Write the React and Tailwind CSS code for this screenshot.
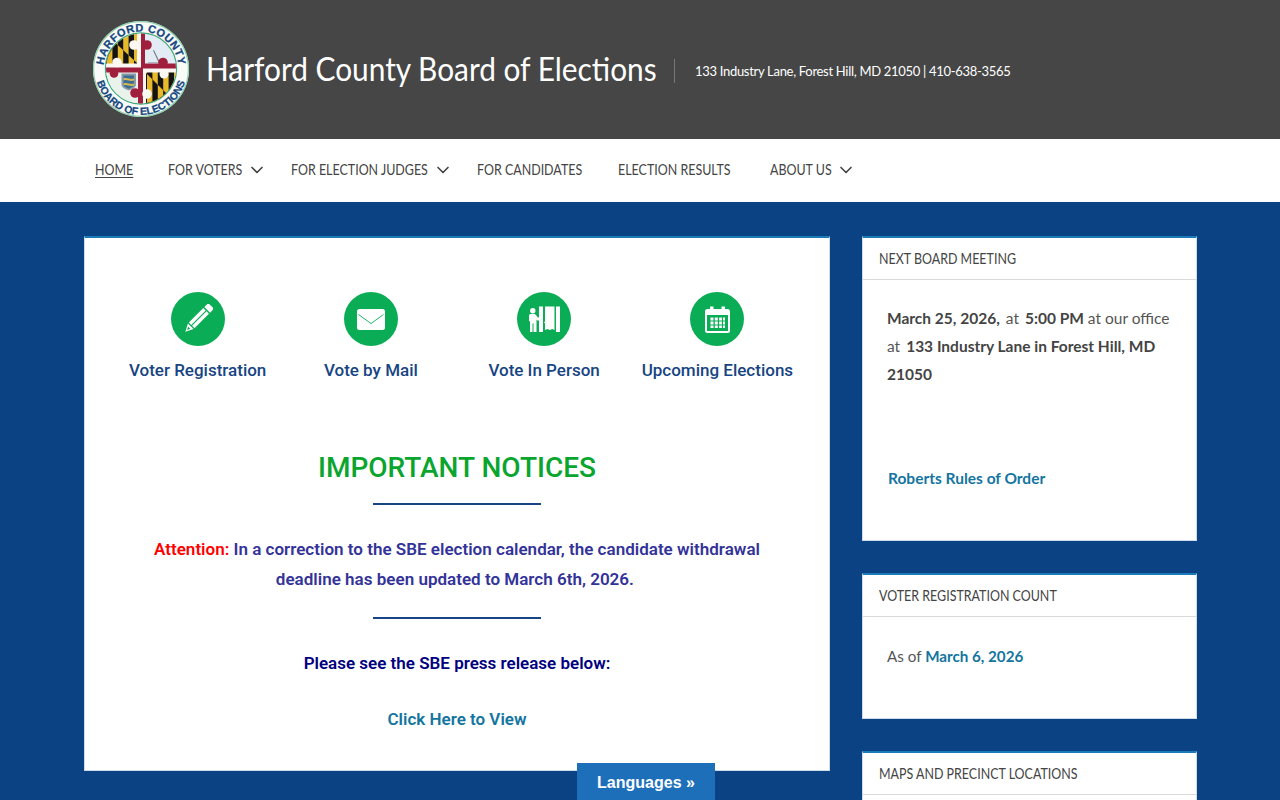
import React from 'react';
import { FiChevronDown } from 'react-icons/fi';

const NAV_ITEMS = [
  { label: 'HOME', width: 'w-[37px]', active: true },
  { label: 'FOR VOTERS', width: 'w-[75px]', menu: true },
  { label: 'FOR ELECTION JUDGES', width: 'w-[138px]', menu: true },
  { label: 'FOR CANDIDATES', width: 'w-[105px]' },
  { label: 'ELECTION RESULTS', width: 'w-[116px]' },
  { label: 'ABOUT US', width: 'w-[62px]', menu: true },
];

// Calvert quarter: gold and black pallets, counterchanged below the diagonal
const Calvert = ({ id, x, y, w, h }) => {
  const pallets = [0, 2, 4].map((i) => x + 2 + i * 5.4);
  return (
    <g>
      <defs>
        <clipPath id={id}><path d={`M${x} ${y}L${x + w} ${y + h}H${x}Z`} /></clipPath>
      </defs>
      <rect x={x} y={y} width={w} height={h} fill="#e9b92c" />
      {pallets.map((px) => <rect key={px} x={px} y={y} width="5.4" height={h} fill="#141414" />)}
      <g clipPath={`url(#${id})`}>
        <rect x={x} y={y} width={w} height={h} fill="#141414" />
        {pallets.map((px) => <rect key={px} x={px} y={y} width="5.4" height={h} fill="#e9b92c" />)}
      </g>
    </g>
  );
};

const Seal = () => (
  <svg viewBox="0 0 96 96" className="h-24 w-24 shrink-0">
    <defs>
      <clipPath id="seal-inner"><circle cx="48" cy="47.500" r="35" /></clipPath>
      <path id="seal-top" d="M 10.500 48 A 37.500 37.500 0 0 1 85.500 48" />
      <path id="seal-bottom" d="M 2 48 A 46 46 0 0 0 94 48" />
    </defs>
    <circle cx="48" cy="48" r="48" fill="#f8fbf8" />
    <circle cx="48" cy="48" r="47.400" fill="none" stroke="#8fd0ac" strokeWidth="1.200" />
    <circle cx="48" cy="47.500" r="35.600" fill="#e3ecf4" stroke="#3fa878" strokeWidth="1.200" />
    <text fontFamily="'Liberation Sans', sans-serif" fontSize="11" fontWeight="700" fill="#17477f" stroke="#17477f" strokeWidth="0.25" letterSpacing="0.4">
      <textPath href="#seal-top" startOffset="50%" textAnchor="middle">HARFORD COUNTY</textPath>
    </text>
    <text fontFamily="'Liberation Sans', sans-serif" fontSize="10.400" fontWeight="700" fill="#17477f" stroke="#17477f" strokeWidth="0.25">
      <textPath href="#seal-bottom" startOffset="50%" textAnchor="middle">BOARD OF ELECTIONS</textPath>
    </text>
    <g clipPath="url(#seal-inner)">
      <Calvert id="calvert-a" x={12} y={12} w={33} h={31} />
      <Calvert id="calvert-b" x={52} y={51} w={33} h={33} />
      <rect x="12" y="51" width="34" height="34" fill="#e9f3ec" />
      <path d="M28.500 52.500h14.500v11c0 3-4 5-7.200 6-3.300-1-7.300-3-7.300-6z" fill="#8a9aa6" />
      <path d="M30.500 54.500h10.500v9c0 2-3 3.500-5.200 4.300-2.300-.8-5.300-2.300-5.300-4.300z" fill="#3d6c94" />
      <path d="M30.500 57.500c3-1.500 7 1.500 10.500 0v2c-3.500 1.500-7.500-1.500-10.500 0zM30.500 62.500c3-1.500 7 1.500 10.500 0v2c-3.500 1.500-7.500-1.500-10.500 0z" fill="#d7bb52" />
      <path d="M61 29l5.500 11.500-1.200.6L60 29.500z" fill="#7b8086" />
      <path d="M55 41.500h18" stroke="#aab6c2" strokeWidth="1.200" />
      {/* counterchanged cross */}
      <path d="M44 12h4v35h-4zM12 42.500h33v4H12zM49.500 51h3.500v33h-3.500zM48 47.500h36v4H48z" fill="#fbf7f2" />
      <path d="M48 12h4v35h-4zM12 46.500h36v5H12zM45 47h5v37h-5zM48 42.500h36v5H48z" fill="#9f1f3c" />
      <circle cx="54" cy="24" r="4.800" fill="#9f1f3c" />
      <circle cx="70" cy="41.500" r="4.800" fill="#9f1f3c" />
      <circle cx="21" cy="52.500" r="4.300" fill="#9f1f3c" />
      <circle cx="42" cy="72" r="4.800" fill="#9f1f3c" />
      <circle cx="41" cy="24" r="4.800" fill="#fbf7f2" />
      <circle cx="24" cy="41.500" r="4.800" fill="#fbf7f2" />
      <circle cx="71" cy="53" r="4.500" fill="#fbf7f2" />
      <circle cx="54" cy="73" r="4.800" fill="#fbf7f2" />
    </g>
  </svg>
);

const PencilIcon = () => (
  <svg viewBox="0 0 30 30" className="h-[30px] w-[30px]" fill="#fff">
    <g transform="rotate(45 15 15)">
      <path d="M11 -1.500a2 2 0 0 1 2-2h4a2 2 0 0 1 2 2V2h-8z" />
      <path d="M11 3.500h3.400V24H11zM15.600 3.500H19V24h-3.400z" />
      <path d="M11 25.200h8L15 33zM13.600 27.500h2.800L15 30.500z" fillRule="evenodd" />
    </g>
  </svg>
);

const MailIcon = () => (
  <svg viewBox="0 0 28 21" className="h-[21px] w-[28px]">
    <rect width="28" height="21" rx="2.500" fill="#fff" />
    <path d="M1.500 5.500 14 14.500l12.500-9" fill="none" stroke="#0aad55" strokeWidth="0.900" />
  </svg>
);

const BoothIcon = () => (
  <svg viewBox="0 0 31 27" className="h-[27px] w-[31px]" fill="#fff">
    <circle cx="3.800" cy="4.700" r="2.700" />
    <path d="M0 9.500a1.500 1.500 0 0 1 1.500-1.500H6l3 3.500h1V.500h4V26h-4v-11.500H8.500L7.500 13.500V26H4.500v-8.500H3.500V26H1v-10.500L0 15z" />
    <path d="M16 .500h9.500V24l-2.200-1-2.400 1-2.500-1-2.400 1v-6.500l-1-1 1-1z" />
    <path d="M27 .500h4V26h-4z" />
  </svg>
);

const CalendarIcon = () => (
  <svg viewBox="0 0 25 27" className="h-[27px] w-[25px]">
    <path d="M2.500 3H5V.500h3.500V3h8V.500H20V3h2.500A2.500 2.500 0 0 1 25 5.500v19a2.500 2.500 0 0 1-2.500 2.500h-20A2.500 2.500 0 0 1 0 24.500v-19A2.500 2.500 0 0 1 2.500 3z" fill="#fff" />
    <rect x="2" y="9" width="21" height="16" fill="#0aad55" />
    <path d="M5.500 11.500h3v3h-3zM9.800 11.500h3v3h-3zM14.100 11.500h2.800v3h-2.800zM18 11.500h2v3h-2zM5.500 15.500h3v3h-3zM9.800 15.500h3v3h-3zM14.100 15.500h2.800v3h-2.800zM18 15.500h2v3h-2zM5.500 19.500h3v2.500h-3zM9.800 19.500h3v2.500h-3zM14.100 19.500h2.800v2.500h-2.800zM18 19.500h2v2.500h-2z" fill="#fff" />
  </svg>
);

const QuickLink = ({ icon, label }) => (
  <a className="flex flex-col items-center gap-[11px]">
    <span className="flex h-[54px] w-[54px] items-center justify-center rounded-full bg-[#0aad55]">{icon}</span>
    <span className="text-[17px] leading-[26px] font-medium whitespace-nowrap text-[#174583]">{label}</span>
  </a>
);

const Rule = () => <div className="mx-auto h-0.5 w-[168px] bg-[#174583]" />;

const Widget = ({ title, height, children }) => (
  <section className={`border-x border-t-2 border-b border-x-[#cfdbe8] border-t-[#1b7ab8] border-b-[#cfdbe8] bg-white ${height}`}>
    <h2 className="flex h-[42px] items-center border-b border-[#d9d9d9] px-4 text-[15px] leading-none font-normal whitespace-nowrap text-[#444]">
      <span className="origin-left scale-x-[0.83]">{title}</span>
    </h2>
    {children}
  </section>
);

export default function App() {
  return (
    <div className="relative h-screen overflow-hidden bg-[#0a4283] font-['Lato',sans-serif]">
      <header className="h-[139px] bg-[#464646] pt-[21px] pl-[93px]">
        <div className="flex items-center">
          <Seal />
          <h1 className="-mt-[2px] ml-[17px] w-[450px] origin-left scale-x-[0.904] text-[33px] leading-none font-normal whitespace-nowrap text-white">Harford County Board of Elections</h1>
          <div className="mt-1 ml-[18px] h-6 border-l border-[#777]" />
          <p className="mt-1 ml-[20px] text-[13px] leading-6 tracking-[-0.3px] whitespace-nowrap text-white">133 Industry Lane, Forest Hill, MD 21050 | 410-638-3565</p>
        </div>
      </header>

      <nav className="flex h-[63px] items-center gap-9 bg-white pb-0.5 pl-[95px]">
        {NAV_ITEMS.map((item) => (
          <a key={item.label} className="flex items-center text-[15px] whitespace-nowrap text-[#444]">
            <span className={`${item.width} inline-block origin-left scale-x-[0.83] ${item.active ? 'underline underline-offset-2' : ''}`}>{item.label}</span>
            {item.menu && <FiChevronDown className="-mr-[12px] ml-[4px] h-5 w-5" strokeWidth={2} />}
          </a>
        ))}
      </nav>

      <main className="flex items-start gap-8 pt-[34px] pl-[84px]">
        <div className="h-[535px] w-[746px] shrink-0 border-x border-t-2 border-b border-x-[#cfdbe8] border-t-[#1b7ab8] border-b-[#cfdbe8] bg-white font-['Roboto',sans-serif]">
          <div className="grid grid-cols-4 pt-[54px] pr-[25px] pl-[26px]">
            <QuickLink icon={<PencilIcon />} label="Voter Registration" />
            <QuickLink icon={<MailIcon />} label="Vote by Mail" />
            <QuickLink icon={<BoothIcon />} label="Vote In Person" />
            <QuickLink icon={<CalendarIcon />} label="Upcoming Elections" />
          </div>

          <h2 className="mt-[67px] text-center text-[28px] leading-[36px] font-medium text-[#0aa52f]">IMPORTANT NOTICES</h2>
          <div className="mt-[17px]"><Rule /></div>
          <p className="mx-auto mt-[29px] w-[640px] text-center text-[17.05px] leading-[30px] font-semibold text-[#333399]">
            <span className="text-[#ff0000]">Attention:</span> In a correction to the SBE election calendar, the candidate withdrawal deadline has been updated to March 6th, 2026.&nbsp;
          </p>
          <div className="mt-[23px]"><Rule /></div>
          <p className="mt-[29px] text-center text-[17px] leading-[30px] font-semibold text-[#000080]">Please see the SBE press release below:</p>
          <p className="mt-[26px] text-center text-[17px] leading-[30px] font-semibold text-[#14759f]">Click Here to View</p>
        </div>

        <aside className="flex w-[335px] shrink-0 flex-col gap-8">
          <Widget title="NEXT BOARD MEETING" height="h-[305px]">
            <div className="pt-6 pr-5 pl-6 text-[15.5px] leading-7 text-[#555]">
              <p>
                <b className="font-bold text-[#444]">March 25, 2026,</b>
                <span className="mx-[2px]"> at </span>
                <b className="font-bold text-[#444]">5:00 PM</b>
                <span> at our office</span>
                <br />
                <span>at </span>
                <b className="ml-[2px] font-bold text-[#444]">133 Industry Lane in Forest Hill, MD</b>
                <br />
                <b className="font-bold text-[#444]">21050</b>
              </p>
              <p className="mt-[76px] ml-px font-bold text-[#14759f]">Roberts Rules of Order</p>
            </div>
          </Widget>
          <Widget title="VOTER REGISTRATION COUNT" height="h-[146px]">
            <p className="pt-[25px] pl-6 text-[15.2px] leading-7 text-[#555]">As of <span className="font-bold text-[#14759f]">March 6, 2026</span></p>
          </Widget>
          <Widget title="MAPS AND PRECINCT LOCATIONS" height="h-[200px]" />
        </aside>
      </main>

      <button className="absolute bottom-0 left-[577px] h-[37px] w-[138px] bg-[#1e6fba] pt-0.5 font-['Liberation_Sans',sans-serif] text-[16px] font-bold text-white">Languages »</button>
    </div>
  );
}
